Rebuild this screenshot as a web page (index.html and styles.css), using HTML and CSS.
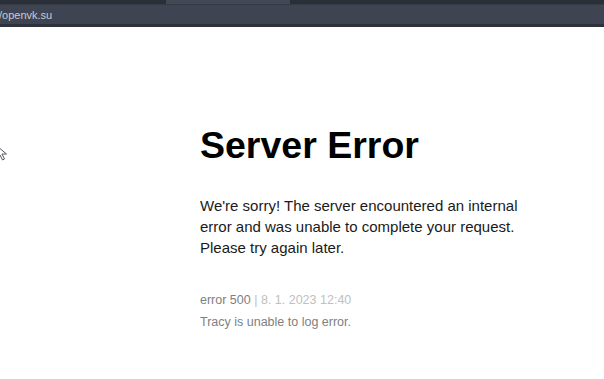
FILE: index.html
```html
<!DOCTYPE html>
<html>
<head>
<title>Server Error</title>
<link rel="stylesheet" href="styles.css">
</head>
<body>

<!-- browser chrome -->
<div class="chrome">
    <div class="tab-strip">
        <div class="tab"></div>
    </div>
    <div class="address-bar">
        <span class="url">/openvk.su</span>
    </div>
</div>

<!-- mouse pointer -->
<svg class="pointer" width="10" height="16" viewBox="0 0 10 16">
    <path d="M-3 1 L-3 13 L0 10 L2.5 15 L4.5 14 L2 9 L6.5 9 Z" fill="#ffffff" stroke="#555a60" stroke-width="1"/>
</svg>

<div class="error-box">
    <h1>Server Error</h1>

    <p>We're sorry! The server encountered an internal error and was unable to complete your request. Please try again later.</p>

    <p class="meta"><small>error 500 <span>| 8. 1. 2023 12:40</span><br>Tracy is unable to log error.</small></p>
</div>

</body>
</html>
```

FILE: styles.css
```css
body {
    margin: 0;
    background-color: #ffffff;
    font-family: "Liberation Sans", Arial, sans-serif;
    color: #333333;
}

.chrome {
    background-color: #2c3039;
}

.tab-strip {
    height: 4px;
    background-color: #2a2e37;
    border-bottom: 1px solid #353a45;
}

.tab {
    margin-left: 166px;
    width: 124px;
    height: 4px;
    background-color: #424856;
}

.address-bar {
    height: 19px;
    background-color: #3e4451;
    border-bottom: 3px solid #2e323b;
    display: flex;
    align-items: center;
}

.url {
    font-family: "Liberation Sans", Arial, sans-serif;
    font-size: 11px;
    color: #c8ccd3;
    margin-left: -1px;
    padding-top: 1px;
}

.pointer {
    position: absolute;
    left: 0;
    top: 145px;
}

.error-box {
    padding-left: 200px;
    padding-top: 98px;
    max-width: 352px;
}

.error-box h1 {
    font: bold 37.5px/1.1 "Liberation Sans", Arial, sans-serif;
    color: #000000;
    margin: 0 0 29px 0;
}

.error-box p {
    font: 15px/1.4 "Liberation Sans", Arial, sans-serif;
    color: #1a1a1a;
    margin: 0 0 30px 0;
}

.error-box .meta small {
    font-size: 12.5px;
    color: #808080;
}

.error-box .meta small span {
    color: #c0c0c0;
}
```
